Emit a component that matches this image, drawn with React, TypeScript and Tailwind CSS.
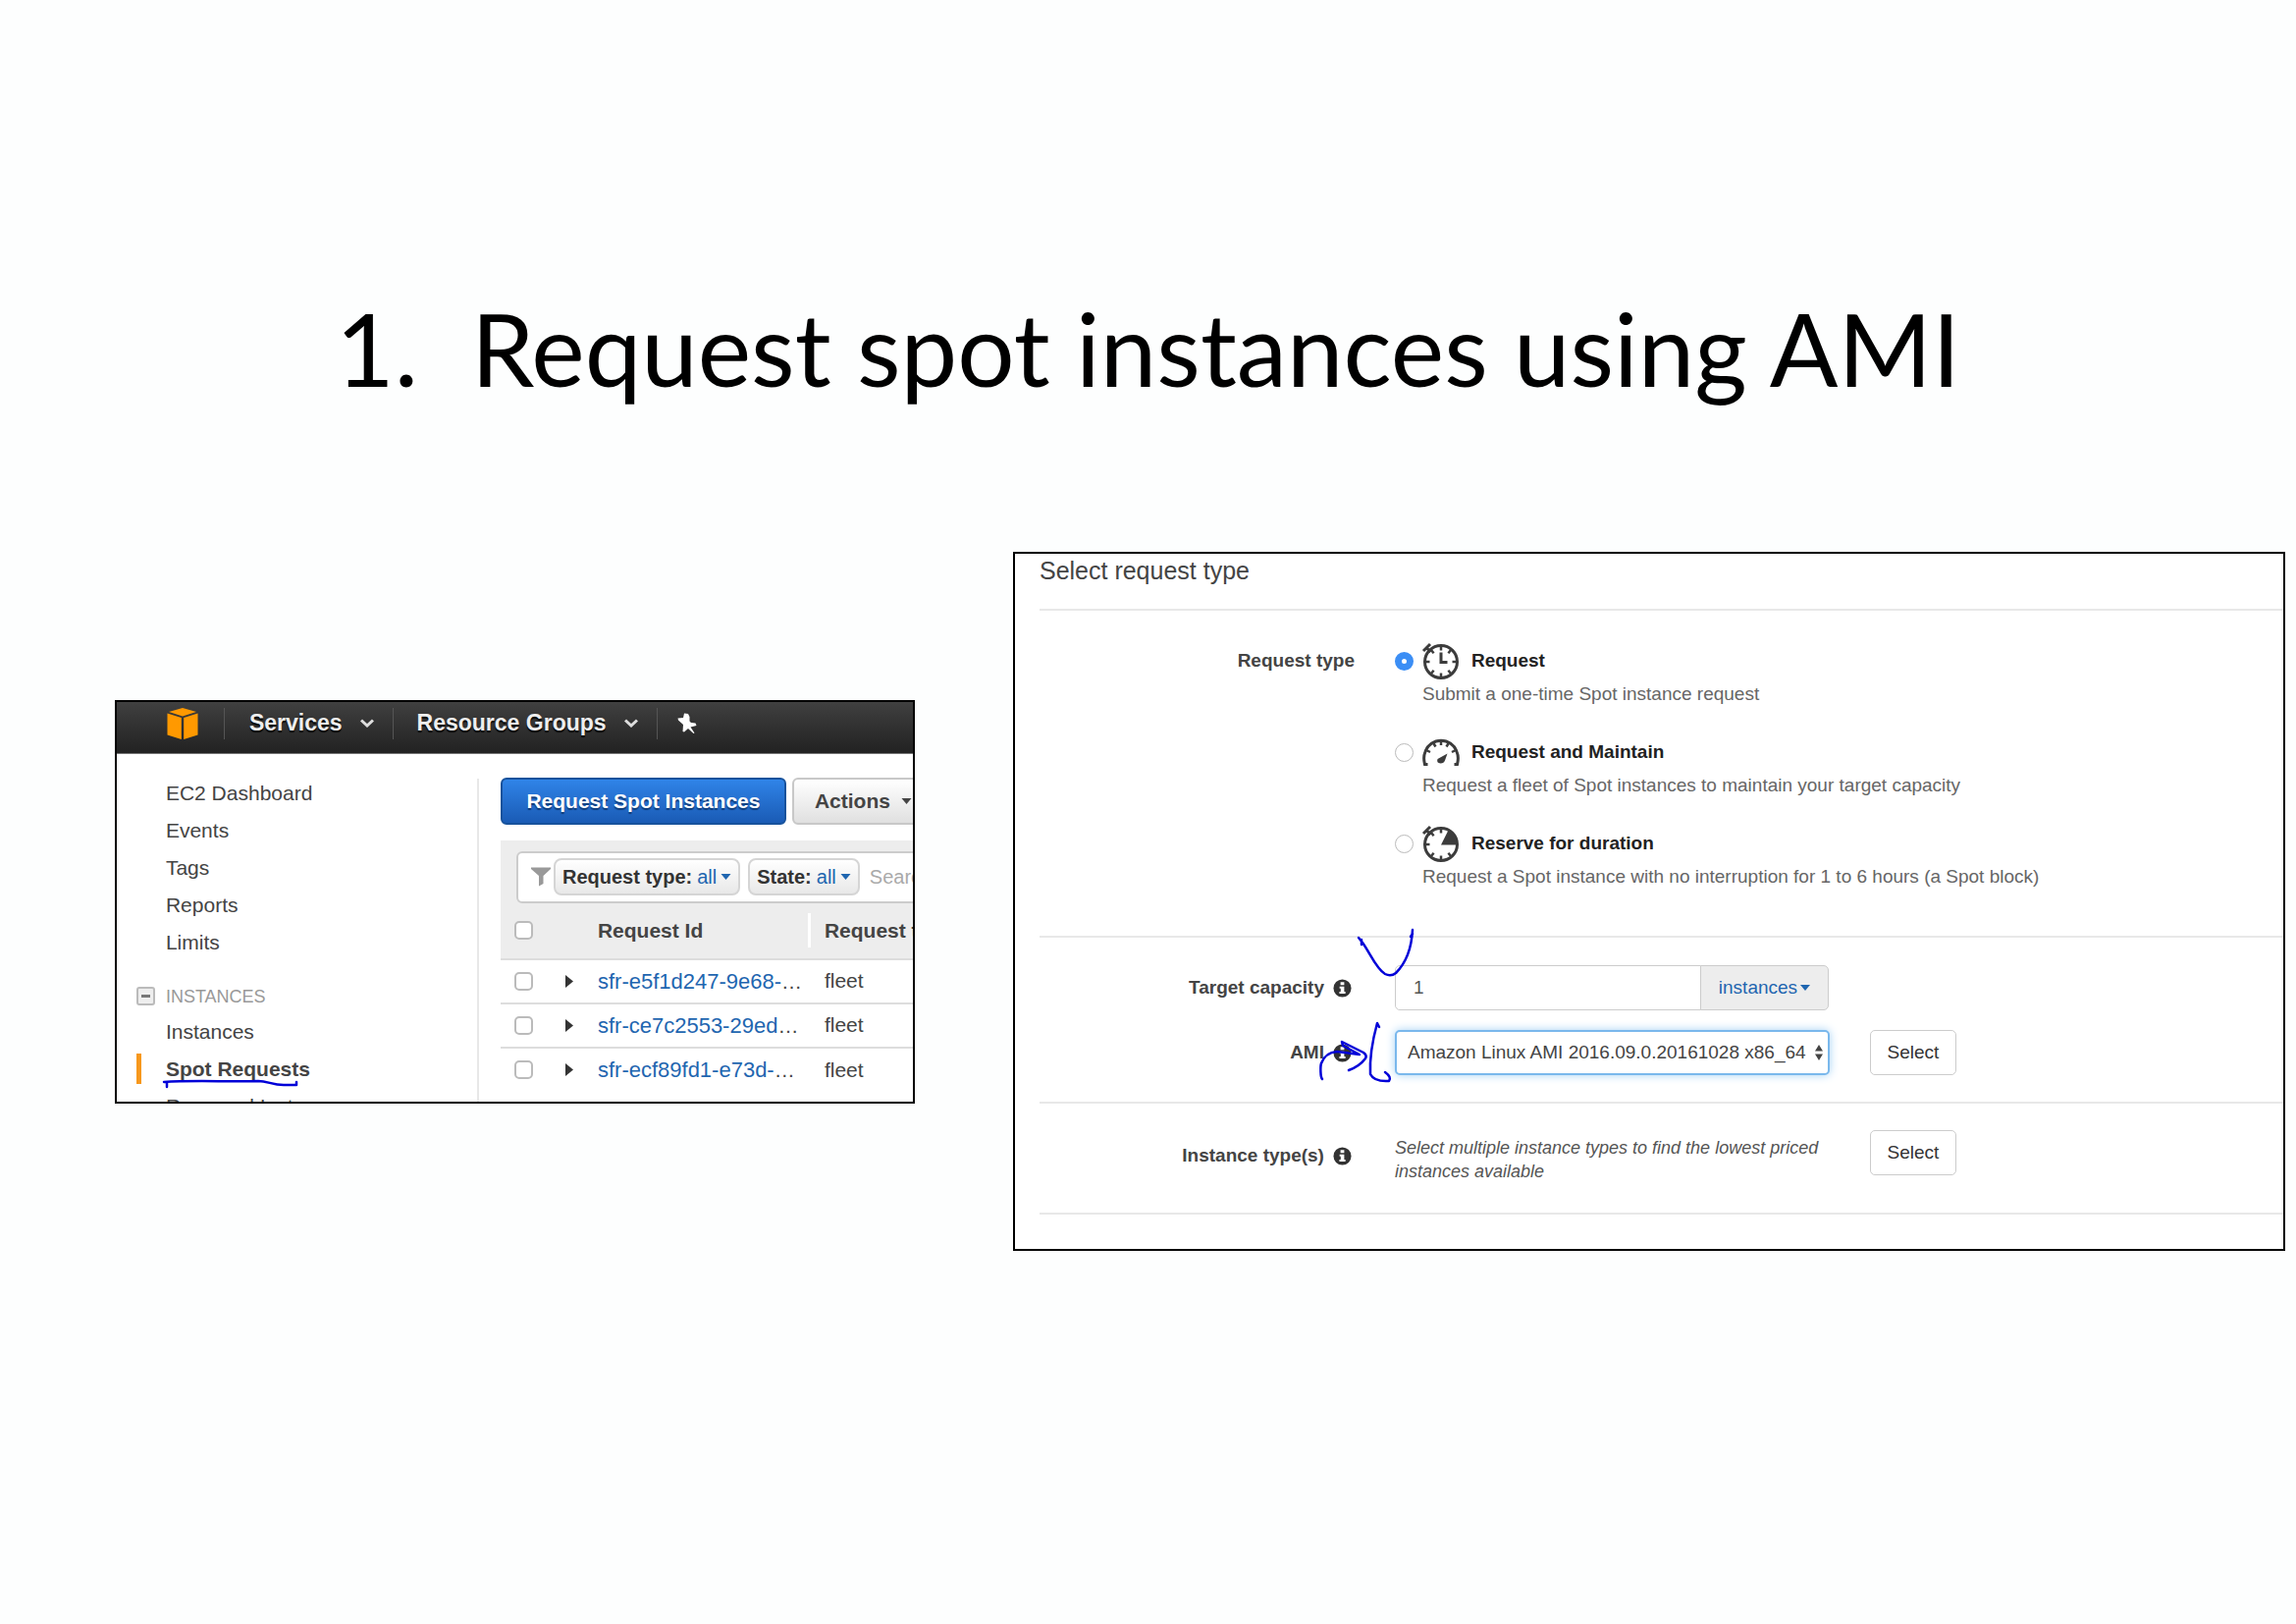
import React, { useState } from "react";

const TickMarks = ({ angles }: { angles: number[] }) => (
  <>
    {angles.map((a) => (
      <line key={a} x1="20" y1="5" x2="20" y2="9.5" transform={`rotate(${a} 20 21)`} />
    ))}
  </>
);

const StopwatchIcon = () => (
  <svg viewBox="0 0 40 40" className="h-10 w-10" fill="none" stroke="#3c3c3c" strokeWidth="3">
    <circle cx="20" cy="21" r="16.5" />
    <g strokeWidth="2.5">
      <TickMarks angles={[0, 40, 90, 140, 180, 220, 270, 320]} />
    </g>
    <path d="M2 10 L9 3 M5.5 7 L9.5 11" />
    <path d="M20 11.500 V21.5 H26.500" />
  </svg>
);

const GaugeIcon = () => (
  <svg viewBox="0 0 40 40" className="h-10 w-10" fill="none" stroke="#3c3c3c" strokeWidth="3">
    <path d="M6.5 32.5 H3.5 C2 27 2.500 23 4 19.500 A17 17 0 0 1 36 19.500 C37.500 23 38 27 36.500 32.500 H33.500" />
    <g strokeWidth="2.5">
      <path d="M20 8 V13 M12 10.500 L14.500 14.500 M28 10.500 L25.500 14.500 M5 18 L9 20 M35 18 L31 20" />
    </g>
    <path d="M26.500 21.500 L16.500 27 Q15 31 19.500 31.500 Q23 31.500 24 28.500 Z" fill="#3c3c3c" stroke="none" />
  </svg>
);

const BlockIcon = () => (
  <svg viewBox="0 0 40 40" className="h-10 w-10" fill="none" stroke="#3c3c3c" strokeWidth="3">
    <circle cx="20" cy="21" r="16.5" />
    <g strokeWidth="2.5">
      <TickMarks angles={[0, 140, 180, 220, 270, 320]} />
    </g>
    <path d="M2 10 L9 3 M5.5 7 L9.500 11" />
    <path d="M20 21.500 L28 5.500 A17 17 0 0 1 37 21.500 Z" fill="#3c3c3c" stroke="none" />
  </svg>
);

const InfoIcon = () => (
  <svg viewBox="0 0 20 20" className="h-[19px] w-[19px] shrink-0" aria-label="Info">
    <circle cx="10" cy="10" r="9.500" fill="#333" />
    <path d="M8 3.500 h4 v3 h-4z M7 8.200 h5 v5.600 h1.300 v2 H6.800 v-2 H8.200 v-3.600 H7z" fill="#fff" />
  </svg>
);

const CubeLogo = () => (
  <svg viewBox="0 0 32 34" className="h-[34px] w-8" fill="#f90">
    <path d="M16 1 L30 5 L16 9.500 L2 5 Z" />
    <path d="M0.500 6.500 L14.800 11 V33 L0.500 28.500 Z" />
    <path d="M31.500 6.500 L17.200 11 V33 L31.500 28.500 Z" />
  </svg>
);

const Chevron = () => (
  <svg viewBox="0 0 14 9" className="h-[9px] w-[14px]" fill="none" stroke="#ddd" strokeWidth="3">
    <path d="M1 1.500 L7 7 L13 1.500" />
  </svg>
);

const PinIcon = () => (
  <svg viewBox="0 0 20 22" className="h-[22px] w-5" fill="#fff">
    <path d="M7 0.500 L11 1 L12.500 4 L12.500 8.500 L14 10 L18.500 10.500 L19.500 13 L13.500 14.500 L17.500 20.500 L16.500 21 L11 16 L7 19.500 L5.500 19 L6 12 L1 7.500 L0.500 5.500 L6 5 Z" />
  </svg>
);

const FunnelIcon = () => (
  <svg viewBox="0 0 20 20" className="h-5 w-5 shrink-0" fill="#999">
    <path d="M0 0.500 H20 V2 L12.500 9 V17 L8 19.500 V9 L0 2 Z" />
  </svg>
);

const Caret = ({ className }: { className: string }) => (
  <svg viewBox="0 0 10 6" className={className} fill="currentColor">
    <path d="M0 0 H10 L5 6 Z" />
  </svg>
);

const mainLinks = ["EC2 Dashboard", "Events", "Tags", "Reports", "Limits"];
const requests = ["sfr-e5f1d247-9e68-", "sfr-ce7c2553-29ed", "sfr-ecf89fd1-e73d-"];

const options = [
  { id: "request", title: "Request", text: "Submit a one-time Spot instance request", Icon: StopwatchIcon },
  { id: "maintain", title: "Request and Maintain", text: "Request a fleet of Spot instances to maintain your target capacity", Icon: GaugeIcon },
  { id: "reserve", title: "Reserve for duration", text: "Request a Spot instance with no interruption for 1 to 6 hours (a Spot block)", Icon: BlockIcon },
];

const checkbox =
  "block h-[19px] w-[19px] appearance-none rounded-[5px] border-2 border-[#bbb] bg-white checked:bg-[#1f62b5]";
const chip =
  "flex h-[38px] shrink-0 items-center rounded-[8px] border-2 border-[#d5d5d5] bg-linear-to-b from-white to-[#e8e8e8] px-[7px] text-[20px] text-[#333]";

function ConsolePanel() {
  return (
    <section className="relative flex h-[411px] min-w-0 flex-col overflow-hidden border-2 border-black bg-white text-[21px] text-[#444]">
      <nav className="flex h-[53px] shrink-0 items-center border-b border-[#777] bg-linear-to-b from-[#404040] to-[#222] pb-2 text-[23px] font-bold text-[#eee]">
        <a href="#home" aria-label="Home" className="ml-[51px] mr-[26px]">
          <CubeLogo />
        </a>
        <span className="h-8 w-px bg-[#555]" />
        <button className="flex items-center gap-[18px] pl-[25px] pr-[19px] [text-shadow:0_2px_1px_#000]">
          Services <Chevron />
        </button>
        <span className="h-8 w-px bg-[#555]" />
        <button className="flex items-center gap-[18px] pl-6 pr-[19px] [text-shadow:0_2px_1px_#000]">
          Resource Groups <Chevron />
        </button>
        <span className="h-8 w-px bg-[#555]" />
        <button aria-label="Pin" className="ml-5">
          <PinIcon />
        </button>
      </nav>
      <div className="flex min-h-0 flex-1">
        <aside className="w-[367px] shrink-0 pt-[21px] leading-[38px]">
          <ul>
            {mainLinks.map((l) => (
              <li key={l} className="pl-[50px]">
                <a href="#nav">{l}</a>
              </li>
            ))}
          </ul>
          <div className="mt-[19px] flex items-center gap-[11px] pl-5 text-[18px] leading-[34px] text-[#999]">
            <button
              aria-label="Collapse Instances"
              className="flex h-[19px] w-[19px] items-center justify-center rounded-[3px] border-2 border-[#bbb] bg-[#eee]"
            >
              <span className="h-[3px] w-[9px] bg-[#777]" />
            </button>
            INSTANCES
          </div>
          <ul>
            <li className="pl-[50px]">
              <a href="#nav">Instances</a>
            </li>
            <li className="flex items-center pl-5 font-bold">
              <span className="mr-[25px] h-[31px] w-[5px] bg-[#f7981d]" />
              <a href="#nav">Spot Requests</a>
            </li>
            <li className="pl-[50px]">
              <a href="#nav">Reserved Instances</a>
            </li>
          </ul>
        </aside>
        <div className="mt-[25px] w-[2px] shrink-0 bg-[#e8e8e8]" />
        <main className="ml-[22px] min-w-0 flex-1 overflow-hidden pt-6">
          <div className="flex gap-[6px] font-bold">
            <button className="h-12 w-[291px] shrink-0 whitespace-nowrap rounded-[6px] border-2 border-[#17529c] bg-linear-to-b from-[#3084e8] to-[#1a5bb5] text-white [text-shadow:0_2px_1px_#103c78]">
              Request Spot Instances
            </button>
            <button className="flex h-12 shrink-0 items-center gap-[11px] rounded-[6px] border-2 border-[#c8c8c8] bg-linear-to-b from-white to-[#e0e0e0] px-[21px]">
              Actions <Caret className="h-[6px] w-[11px]" />
            </button>
          </div>
          <div className="mt-4 bg-[#ededed] pl-4 pt-[11px]">
            <div className="flex h-[53px] w-[600px] items-center rounded-l-[6px] border-2 border-[#ccc] bg-white pl-[13px]">
              <FunnelIcon />
              <button className={chip + " ml-[3px]"}>
                <b>Request type:</b>
                <span className="ml-[5px] text-[#1f66b0]">all</span>
                <Caret className="ml-1 h-[6px] w-[11px] text-[#1f66b0]" />
              </button>
              <button className={chip + " ml-2"}>
                <b>State:</b>
                <span className="ml-[5px] text-[#1f66b0]">all</span>
                <Caret className="ml-1 h-[6px] w-[11px] text-[#1f66b0]" />
              </button>
              <input aria-label="Search" placeholder="Search" className="ml-[10px] w-40 text-[20px] placeholder:text-[#aaa]" />
            </div>
          </div>
          <table className="w-[600px] table-fixed border-collapse text-left">
            <colgroup>
              <col className="w-[50px]" />
              <col className="w-[49px]" />
              <col className="w-[217px]" />
              <col />
            </colgroup>
            <thead>
              <tr className="h-[57px] border-b-2 border-[#ddd] bg-[#ededed]">
                <th className="pl-[14px]">
                  <input type="checkbox" aria-label="Select all" className={checkbox} />
                </th>
                <th />
                <th>
                  <div className="flex h-[35px] items-center border-r-[3px] border-white">Request Id</div>
                </th>
                <th className="whitespace-nowrap pl-[14px]">Request type</th>
              </tr>
            </thead>
            <tbody>
              {requests.map((r, i) => (
                <tr key={r} className={i < 2 ? "h-[45px] border-b-2 border-[#ddd]" : "h-[45px]"}>
                  <td className="pl-[14px]">
                    <input type="checkbox" aria-label={r} className={checkbox} />
                  </td>
                  <td className="pl-4">
                    <button aria-label="Expand" className="block">
                      <svg viewBox="0 0 8 13" className="h-[13px] w-2" fill="#333">
                        <path d="M0 0 L8 6.500 L0 13 Z" />
                      </svg>
                    </button>
                  </td>
                  <td className="whitespace-nowrap">
                    <a href="#request" className="text-[22px] text-[#1f66b0]">
                      {r}
                    </a>
                    …
                  </td>
                  <td className="pl-[14px]">fleet</td>
                </tr>
              ))}
            </tbody>
          </table>
        </main>
      </div>
      <svg
        viewBox="0 0 140 12"
        className="pointer-events-none absolute left-[46px] top-[384px] h-3 w-[140px]"
        fill="none"
        stroke="#0000d8"
        strokeWidth="2.500"
        strokeLinecap="round"
        strokeLinejoin="round"
      >
        <path d="M2 3 C30 1 70 3 98 2 C108 2 112 6 124 6 H137 V3 M5 3 V8" />
      </svg>
    </section>
  );
}

const selectBtn = "h-[46px] w-[88px] shrink-0 rounded-[5px] border border-[#ccc] bg-white text-[#333]";
const row = "grid grid-cols-[321px_1fr] gap-x-[41px]";
const labelCls = "flex items-center justify-end gap-[9px] font-bold";

function RequestPanel() {
  const [type, setType] = useState("request");
  return (
    <section className="relative min-w-0 border-2 border-black bg-white pb-[35px] pl-[25px] text-[19px] text-[#444]">
      <h2 className="pb-[23px] pt-[2px] text-[25px] leading-[31px]">Select request type</h2>
      <fieldset className={row + " border-t-2 border-[#e8e8e8] pb-[46px] pt-[31px]"}>
        <div className="flex h-10 items-center justify-end font-bold">Request type</div>
        <div className="flex flex-col gap-[25px]">
          {options.map(({ id, title, text, Icon }) => (
            <div key={id}>
              <label className="flex h-10 items-center">
                <input
                  type="radio"
                  name="type"
                  checked={type === id}
                  onChange={() => setType(id)}
                  className="mr-2 h-[19px] w-[19px] appearance-none rounded-full border border-[#bbb] bg-white checked:border-[7px] checked:border-[#3b8ef5]"
                />
                <Icon />
                <span className="ml-[11px] font-bold text-[#222]">{title}</span>
              </label>
              <p className="pl-7 leading-[28px] text-[#666]">{text}</p>
            </div>
          ))}
        </div>
      </fieldset>
      <div className="flex flex-col gap-5 border-t-2 border-[#e8e8e8] pb-[27px] pt-7">
        <div className={row}>
          <label htmlFor="capacity" className={labelCls + " pr-[3px]"}>
            Target capacity <InfoIcon />
          </label>
          <div className="flex">
            <input
              id="capacity"
              defaultValue="1"
              className="h-[46px] w-[312px] rounded-l-[5px] border border-[#ccc] px-[18px] text-[#555]"
            />
            <button className="-ml-px flex h-[46px] w-[131px] items-center justify-center gap-[3px] rounded-r-[5px] border border-[#ccc] bg-[#ededed] text-[#1f66b0]">
              instances <Caret className="h-[6px] w-[10px]" />
            </button>
          </div>
        </div>
        <div className={row}>
          <label htmlFor="ami" className={labelCls + " pr-[3px]"}>
            AMI <InfoIcon />
          </label>
          <div className="flex gap-[41px]">
            <div className="relative w-[443px] shrink-0">
              <select
                id="ami"
                className="h-[46px] w-full appearance-none rounded-[5px] border-2 border-[#7ab8ec] bg-white pl-[11px] text-[#444] shadow-[0_0_10px_#a5d2f5]"
              >
                <option>Amazon Linux AMI 2016.09.0.20161028 x86_64</option>
              </select>
              <svg viewBox="0 0 8 16" className="pointer-events-none absolute right-[7px] top-[15px] h-4 w-2" fill="#444">
                <path d="M4 0 L8 6.500 H0 Z M4 16 L8 9.500 H0 Z" />
              </svg>
            </div>
            <button className={selectBtn}>Select</button>
          </div>
        </div>
      </div>
      <div className={row + " border-y-2 border-[#e8e8e8] pb-[30px] pt-[27px]"}>
        <div className={labelCls + " h-[52px] pr-[3px]"}>
          Instance type(s) <InfoIcon />
        </div>
        <div className="flex gap-[41px]">
          <p className="w-[443px] shrink-0 pt-[6px] text-[18px] italic leading-6 text-[#555]">
            Select multiple instance types to find the lowest priced instances available
          </p>
          <button className={selectBtn}>Select</button>
        </div>
      </div>
      <svg
        viewBox="1340 940 110 170"
        className="pointer-events-none absolute left-[306px] top-[377px] h-[170px] w-[110px]"
        fill="none"
        stroke="#0000d8"
        strokeWidth="2.500"
        strokeLinecap="round"
        strokeLinejoin="round"
      >
        <path d="M1384 954 L1388 959 C1396 970 1402 986 1411 991 Q1417 994 1422 990 C1432 980 1438 965 1439 946 M1387 956 V961 M1437 953 L1439 950" />
        <path d="M1405 1045 L1403 1041 C1400 1052 1395 1075 1396 1093 Q1400 1101 1415 1100 Q1418 1096 1411 1091" />
        <path d="M1347 1098 C1345 1096 1345 1085 1346 1082 Q1350 1071 1362 1070 L1385 1073 L1368 1064 L1367 1060 L1389 1071 Q1393 1074 1391 1077 Q1385 1085 1374 1089" />
      </svg>
    </section>
  );
}

export default function App() {
  return (
    <div className="min-h-screen bg-[#fdfefe] pt-[289px] font-['Liberation_Sans',Arial,sans-serif]">
      <h1 className="flex justify-center gap-[54px] whitespace-nowrap font-['Gill_Sans','Lato',sans-serif] text-[103px] leading-[130px] text-black">
        <span>1.</span>
        <span>Request spot instances using AMI</span>
      </h1>
      <div className="mt-[143px] grid grid-cols-[815fr_1296fr] items-center gap-[100px] pl-[5%] pr-[11px]">
        <ConsolePanel />
        <RequestPanel />
      </div>
    </div>
  );
}
